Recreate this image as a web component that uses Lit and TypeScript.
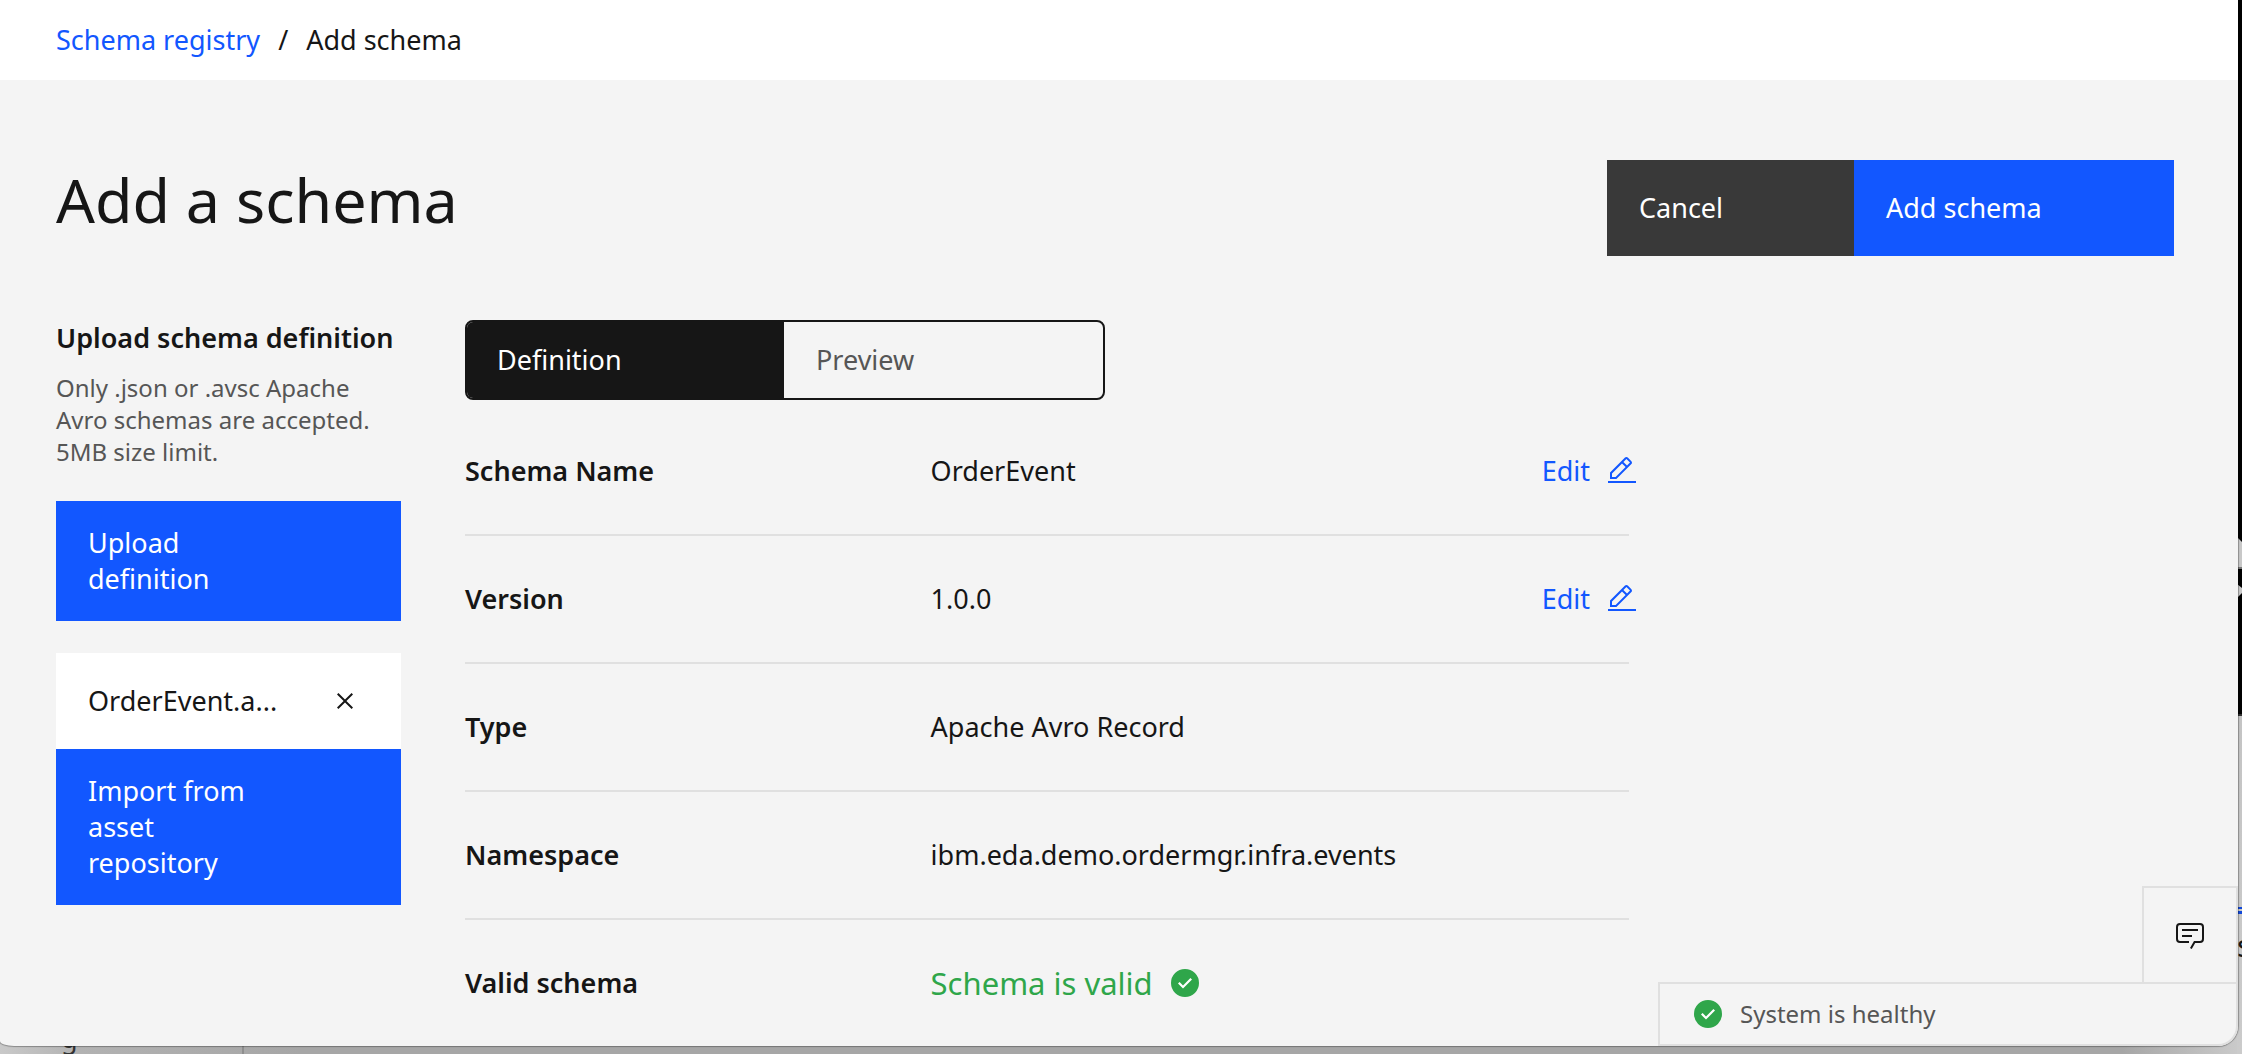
import { LitElement, html, css, svg, nothing } from "lit";
import { customElement, property, state } from "lit/decorators.js";

const ICONS: Record<string, string[]> = {
  edit: [
    "M2 26H30V28H2z",
    "M25.4 9c.8-.8.8-2 0-2.8l-3.6-3.6c-.8-.8-2-.8-2.8 0l-15 15V24h6.4L25.4 9zM20.4 4L24 7.6l-3 3L17.4 7 20.4 4zM6 22v-3.6l10-10 3.6 3.6-10 10H6z",
  ],
  check: [
    "M16 2a14 14 0 1 0 14 14A14 14 0 0 0 16 2zM14 21.59l-5-5L10.59 15 14 18.41 21.41 11 23 12.59z",
  ],
  close: [
    "M24 9.4L22.6 8 16 14.6 9.4 8 8 9.4 14.6 16 8 22.6 9.4 24 16 17.4 22.6 24 24 22.6 17.4 16z",
  ],
  chat: [
    "M17.74 30L16 29l4-7h6a2 2 0 0 0 2-2V8a2 2 0 0 0-2-2H6a2 2 0 0 0-2 2v12a2 2 0 0 0 2 2h9v2H6a4 4 0 0 1-4-4V8a4 4 0 0 1 4-4h20a4 4 0 0 1 4 4v12a4 4 0 0 1-4 4h-4.84z",
    "M8 10h16v2H8zM8 16h10v2H8z",
  ],
};

@customElement("ui-icon")
export class UiIcon extends LitElement {
  static styles = css`
    :host {
      display: block;
      flex: none;
      width: 32px;
      height: 32px;
    }
    .glyph {
      display: block;
      width: 100%;
      height: 100%;
      fill: currentColor;
    }
    .filled {
      background: radial-gradient(circle, #fff 10px, transparent 11px);
    }
  `;

  @property() name = "";

  render() {
    return html`<svg
      class="glyph ${this.name === "check" ? "filled" : ""}"
      viewBox="0 0 32 32"
      aria-hidden="true"
    >
      ${(ICONS[this.name] ?? []).map((d) => svg`<path d=${d}></path>`)}
    </svg>`;
  }
}

interface Detail {
  label: string;
  value: string;
  editable?: boolean;
}

const DETAILS: Detail[] = [
  { label: "Schema Name", value: "OrderEvent", editable: true },
  { label: "Version", value: "1.0.0", editable: true },
  { label: "Type", value: "Apache Avro Record" },
  { label: "Namespace", value: "ibm.eda.demo.ordermgr.infra.events" },
];

@customElement("app-root")
export class AppRoot extends LitElement {
  static styles = css`
    :host {
      display: block;
      box-sizing: border-box;
      position: relative;
      min-height: 100vh;
      padding: 0 4px 8px 0;
      overflow: hidden;
      background: linear-gradient(90deg, #c9c9c9, #b2b2b2 80px, #a6a6a6 300px, #a6a6a6 calc(100% - 120px), #cbcbcb);
      color: #161616;
      font-family: "Noto Sans", "Open Sans", sans-serif;
      font-size: 27px;
      line-height: 36px;
    }
    *,
    *::before {
      box-sizing: border-box;
    }
    button {
      margin: 0;
      border: 0;
      border-radius: 0;
      background: none;
      color: inherit;
      font: inherit;
      text-align: left;
      cursor: pointer;
    }

    /* Page behind the window */
    .behind {
      position: absolute;
      overflow: hidden;
    }
    .behind-right {
      top: 0;
      right: 0;
      bottom: 0;
      width: 5px;
      background: linear-gradient(#000 714px, #333 714px 716px, #c4c4c4 716px, #cbcbcb);
    }
    .behind-shapes {
      display: block;
      width: 5px;
      height: 1000px;
    }
    .behind-letter {
      position: absolute;
      top: 927px;
      left: 0;
      font-size: 31px;
    }
    .behind-bottom {
      left: 0;
      bottom: 0;
      width: 244px;
      height: 8px;
      border-right: 2px solid #8f8f8f;
    }
    .behind-word {
      position: absolute;
      left: 61px;
      bottom: -2px;
      color: #333;
    }

    .window {
      position: relative;
      min-height: calc(100vh - 8px);
      overflow: hidden;
      border-radius: 0 0 20px 14px / 0 0 20px 5px;
      background: #f4f4f4;
      box-shadow: 0 0 1px 1px rgba(0, 0, 0, 0.3);
    }
    .crumbs {
      display: flex;
      align-items: center;
      gap: 18px;
      height: 80px;
      padding: 0 56px;
      background: #fff;
    }
    .link {
      color: #1257ff;
      text-decoration: none;
    }

    .page {
      padding: 80px 64px 0 56px;
    }
    .title-row {
      display: flex;
      justify-content: space-between;
      align-items: flex-start;
      margin-bottom: 64px;
    }
    .title {
      margin: 0;
      font-size: 61px;
      font-weight: 400;
      line-height: 80px;
    }
    .actions {
      display: flex;
    }
    .action {
      height: 96px;
      padding: 0 64px 0 32px;
      color: #fff;
    }
    .cancel {
      min-width: 247px;
      background: #393939;
    }
    .add {
      min-width: 320px;
    }
    .primary {
      background: #1257ff;
      color: #fff;
    }

    .columns {
      display: grid;
      grid-template-columns: 345px minmax(0, 1164px);
      column-gap: 64px;
      align-items: start;
    }
    .heading {
      margin: 0 0 16px;
      font-size: 27px;
      font-weight: 600;
      line-height: 36px;
      white-space: nowrap;
    }
    .hint {
      margin: 0 0 33px;
      color: #565656;
      font-size: 24px;
      line-height: 32px;
    }
    .block {
      display: block;
      width: 100%;
      padding: 24px 128px 24px 32px;
    }
    .file {
      display: flex;
      justify-content: space-between;
      align-items: center;
      height: 96px;
      margin-top: 32px;
      padding: 0 40px 0 32px;
      background: #fff;
    }
    .remove {
      padding: 0;
    }

    .switcher {
      display: flex;
      width: 640px;
      height: 80px;
      margin-bottom: 8px;
      overflow: hidden;
      border: 2px solid #161616;
      border-radius: 8px;
    }
    .tab {
      flex: 1;
      padding: 0 32px;
      color: #565656;
    }
    .tab[aria-selected="true"] {
      padding-left: 30px;
      background: #161616;
      color: #fff;
    }

    .details {
      margin: 0;
    }
    .row {
      display: grid;
      grid-template-columns: 2fr 3fr;
      align-items: center;
      height: 128px;
      border-bottom: 2px solid #e0e0e0;
    }
    .row:last-child {
      height: 126px;
      border-bottom: 0;
    }
    .label {
      font-weight: 600;
    }
    .cell {
      display: flex;
      justify-content: space-between;
      align-items: center;
      margin: 0;
    }
    .edit {
      display: flex;
      align-items: center;
      gap: 16px;
      margin-right: -9px;
      padding: 0;
      color: #1257ff;
    }
    .valid {
      display: flex;
      align-items: center;
      gap: 16px;
      color: #2fa64a;
      font-size: 31px;
    }

    /* Floating feedback button and status strip */
    .dock {
      position: absolute;
      right: 0;
      bottom: 0;
      display: flex;
      flex-direction: column;
      align-items: flex-end;
      width: 580px;
    }
    .feedback {
      display: flex;
      justify-content: center;
      align-items: center;
      width: 96px;
      height: 96px;
      padding: 0;
      border: 2px solid #e0e0e0;
      border-bottom: 0;
      background: #f4f4f4;
    }
    .status {
      display: flex;
      align-items: center;
      gap: 16px;
      width: 100%;
      height: 64px;
      padding: 0 32px;
      border: 2px solid #e0e0e0;
      border-bottom-right-radius: 20px;
      background: #f4f4f4;
      color: #565656;
      font-size: 24px;
    }
    .ok {
      color: #2fa64a;
    }
  `;

  @state() private tab = "Definition";

  private renderDetail(d: Detail) {
    return html`<div class="row">
      <dt class="label">${d.label}</dt>
      <dd class="cell">
        <span>${d.value}</span>
        ${d.editable
          ? html`<button class="edit" type="button">Edit<ui-icon name="edit"></ui-icon></button>`
          : nothing}
      </dd>
    </div>`;
  }

  render() {
    return html`
      <div class="behind behind-right" aria-hidden="true">
        <svg class="behind-shapes" viewBox="0 0 5 1000">
          <path d="M0 537L5 542V568H0z" fill="#c8c8c8"></path>
          <path d="M0 567H5V569H0z" fill="#777"></path>
          <path d="M0 584L5 588V593L0 598z" fill="#c8c8c8"></path>
          <path d="M0 907H5V909H0zM0 911H5V914H0z" fill="#1148d8"></path>
        </svg>
        <span class="behind-letter">s</span>
      </div>
      <div class="behind behind-bottom" aria-hidden="true"><span class="behind-word">g</span></div>
      <div class="window">
        <nav class="crumbs" aria-label="Breadcrumb">
          <a class="link" href="#registry">Schema registry</a>
          <span>/</span>
          <span aria-current="page">Add schema</span>
        </nav>
        <main class="page">
          <div class="title-row">
            <h1 class="title">Add a schema</h1>
            <div class="actions">
              <button class="action cancel" type="button">Cancel</button>
              <button class="action add primary" type="button">Add schema</button>
            </div>
          </div>
          <div class="columns">
            <aside>
              <h2 class="heading">Upload schema definition</h2>
              <p class="hint">Only .json or .avsc Apache Avro schemas are accepted. 5MB size limit.</p>
              <button class="block primary" type="button">Upload definition</button>
              <div class="file">
                <span>OrderEvent.a...</span>
                <button class="remove" type="button" aria-label="Remove file">
                  <ui-icon name="close"></ui-icon>
                </button>
              </div>
              <button class="block primary" type="button">Import from asset repository</button>
            </aside>
            <section>
              <div class="switcher" role="tablist">
                ${["Definition", "Preview"].map(
                  (name) => html`<button
                    class="tab"
                    type="button"
                    role="tab"
                    aria-selected=${this.tab === name ? "true" : "false"}
                    @click=${() => (this.tab = name)}
                  >
                    ${name}
                  </button>`
                )}
              </div>
              <dl class="details">
                ${DETAILS.map((d) => this.renderDetail(d))}
                <div class="row">
                  <dt class="label">Valid schema</dt>
                  <dd class="cell">
                    <span class="valid">Schema is valid<ui-icon name="check"></ui-icon></span>
                  </dd>
                </div>
              </dl>
            </section>
          </div>
        </main>
        <div class="dock">
          <button class="feedback" type="button" aria-label="Feedback">
            <ui-icon name="chat"></ui-icon>
          </button>
          <div class="status" role="status">
            <ui-icon class="ok" name="check"></ui-icon>
            <span>System is healthy</span>
          </div>
        </div>
      </div>
    `;
  }
}
